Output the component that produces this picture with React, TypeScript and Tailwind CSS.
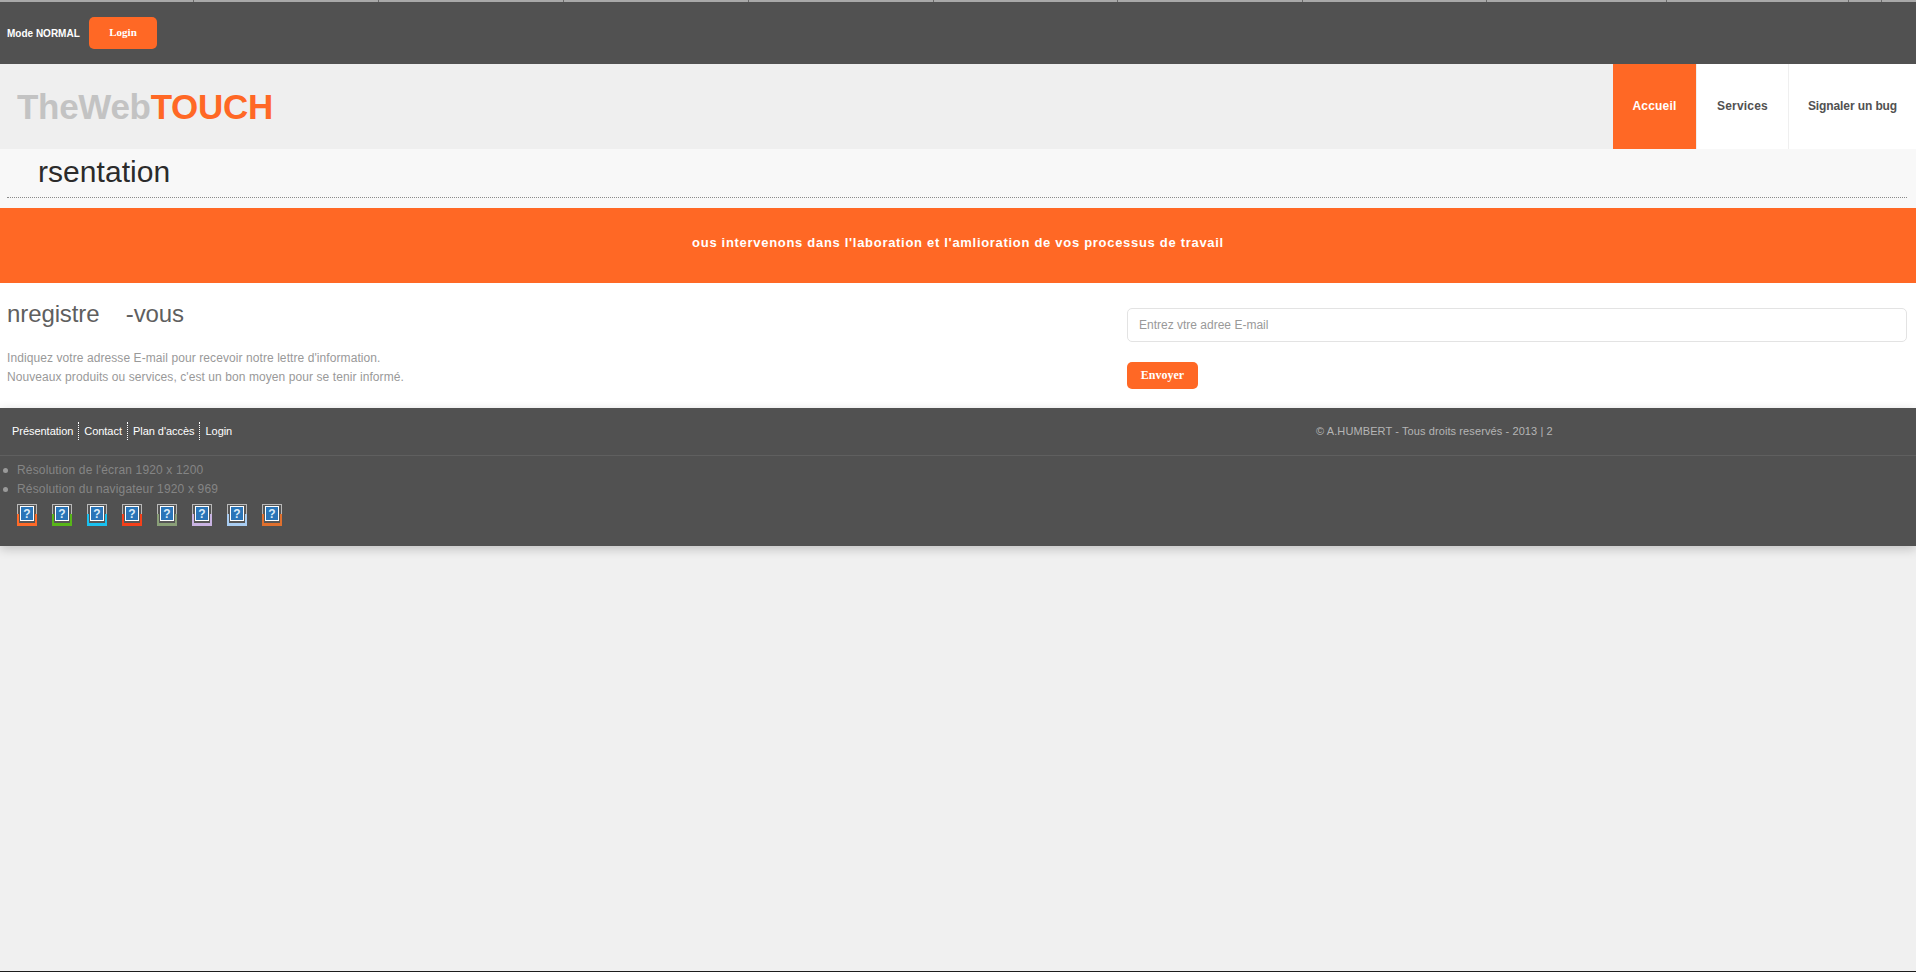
import React from 'react';

const stripWidths = [193, 184, 184, 184, 184, 183, 184, 183, 179, 181, 32, 34];
const footerLinks = ['Présentation', 'Contact', "Plan d'accès", 'Login'];
const badgeColors = ['#ff6a28', '#58b618', '#19c1f0', '#f5401a', '#8a9f78', '#c9b3e2', '#a9cdf2', '#e0702e'];

function BrokenBadge({ color }: { color: string }) {
  return (
    <svg width="20" height="22" viewBox="0 0 20 22" className="block shrink-0">
      <rect x="0" y="0" width="20" height="22" fill="#b9b9b9" />
      <rect x="1" y="1" width="18" height="19" fill="#565656" />
      <rect x="0" y="10" width="20" height="12" fill={color} />
      <rect x="2" y="10" width="16" height="9" fill="#565656" />
      <rect x="3" y="2" width="14" height="15" fill="#ffffff" />
      <rect x="4" y="3" width="12" height="13" fill="#2a75b8" />
      <text x="10" y="13.5" textAnchor="middle" fontSize="12" fontWeight="700" fill="#dcecf8" fontFamily="Liberation Sans, sans-serif">?</text>
    </svg>
  );
}

export default function App() {
  return (
    <div className="min-h-[972px] flex flex-col bg-[#f0f0f0] font-['Liberation_Sans',Arial,sans-serif]">
      <div className="flex gap-px h-0.5 bg-[#6a6a6a]">
        {stripWidths.map((w, i) => (
          <div key={i} className="h-full bg-[#a8a8a8]" style={{ width: w }} />
        ))}
      </div>

      <div className="h-[62px] bg-[#515151] flex items-center pl-[7px]">
        <span className="w-[72px] text-[10px] font-bold text-white whitespace-nowrap">Mode NORMAL</span>
        <button className="ml-[10px] w-[68px] h-8 rounded-[5px] bg-[#ff6825] text-white text-[11px] font-bold font-['Liberation_Serif',serif] pb-px">
          Login
        </button>
      </div>

      <header className="h-[85px] bg-[#efefef] flex justify-between">
        <div className="pl-[17px] pt-[21px] text-[35px] leading-[44px] font-bold tracking-[-0.3px]">
          <span className="text-[#c3c3c3]">TheWeb</span>
          <span className="text-[#ff6825]">TOUCH</span>
        </div>
        <nav className="flex text-xs font-bold">
          <a className="w-[83px] pb-px flex items-center justify-center bg-[#ff6825] text-white tracking-[0.2px]">Accueil</a>
          <a className="w-[92px] pb-px flex items-center justify-center bg-white text-[#515151] border-l border-[#efefef] tracking-[0.2px]">Services</a>
          <a className="w-[128px] pb-px flex items-center justify-center bg-white text-[#515151] border-l border-[#efefef] tracking-[-0.1px]">Signaler un bug</a>
        </nav>
      </header>

      <div className="h-[59px] bg-[#f8f8f8] pl-[7px] pr-[9px]">
        <h1 className="h-[49px] pl-[31px] pt-[3px] text-[30px] leading-[40px] tracking-[0.05px] text-[#2b2b2b] border-b border-dotted border-[#8a8a8a]">
          rsentation
        </h1>
      </div>

      <div className="h-[75px] bg-[#ff6825] flex items-center justify-center pb-[5px]">
        <p className="text-[13px] font-bold text-white tracking-[0.7px]">
          ous intervenons dans l&apos;laboration et l&apos;amlioration de vos processus de travail
        </p>
      </div>

      <section className="h-[125px] bg-white flex pl-[7px] pr-[9px]">
        <div className="w-[1120px]">
          <h2 className="pt-4 text-2xl leading-[30px] tracking-[-0.1px] text-[#5f5f5f] whitespace-pre">nregistre    -vous</h2>
          <p className="mt-5 text-xs leading-[19px] tracking-[0.08px] text-[#999999]">
            Indiquez votre adresse E-mail pour recevoir notre lettre d&apos;information.
            <br />
            Nouveaux produits ou services, c&apos;est un bon moyen pour se tenir informé.
          </p>
        </div>
        <div className="flex-1 pt-[25px]">
          <input
            className="w-full h-[34px] px-[11px] rounded-[5px] border border-[#e3e3e3] bg-white text-xs placeholder:text-[#999999] outline-none"
            placeholder="Entrez vtre adree E-mail"
          />
          <button className="block mt-5 w-[71px] h-[27px] pb-0.5 rounded-[5px] bg-[#ff6825] text-white text-xs font-bold font-['Liberation_Serif',serif]">
            Envoyer
          </button>
        </div>
      </section>

      <footer className="h-[138px] bg-[#515151] shadow-[0_3px_10px_rgba(0,0,0,0.2)]">
        <div className="h-[48px] flex items-center border-b border-[#5f5f5f] pl-3">
          <ul className="w-[1304px] mb-0.5 flex text-[11px] tracking-[-0.04px] text-white">
            {footerLinks.map((label, i) => (
              <li
                key={label}
                className={i < footerLinks.length - 1 ? 'pr-[5px] mr-[5px] border-r border-dotted border-white leading-[18px]' : 'leading-[18px]'}
              >
                {label}
              </li>
            ))}
          </ul>
          <span className="text-[11px] tracking-[0.1px] text-[#b5b5b5]">© A.HUMBERT - Tous droits reservés - 2013 | 2</span>
        </div>
        <ul className="pt-[5px] text-xs leading-[19px] tracking-[0.16px] text-[#858585]">
          <li className="flex items-center pl-[3px]">
            <span className="w-[5px] h-[5px] mr-[9px] rounded-full bg-[#9a9a9a]" />
            Résolution de l&apos;écran 1920 x 1200
          </li>
          <li className="flex items-center pl-[3px]">
            <span className="w-[5px] h-[5px] mr-[9px] rounded-full bg-[#9a9a9a]" />
            Résolution du navigateur 1920 x 969
          </li>
        </ul>
        <div className="flex gap-[15px] pl-[17px] pt-[5px]">
          {badgeColors.map((c) => (
            <BrokenBadge key={c} color={c} />
          ))}
        </div>
      </footer>

      <div className="flex-1" />
      <div className="h-px bg-[#1c1c1c]" />
    </div>
  );
}
